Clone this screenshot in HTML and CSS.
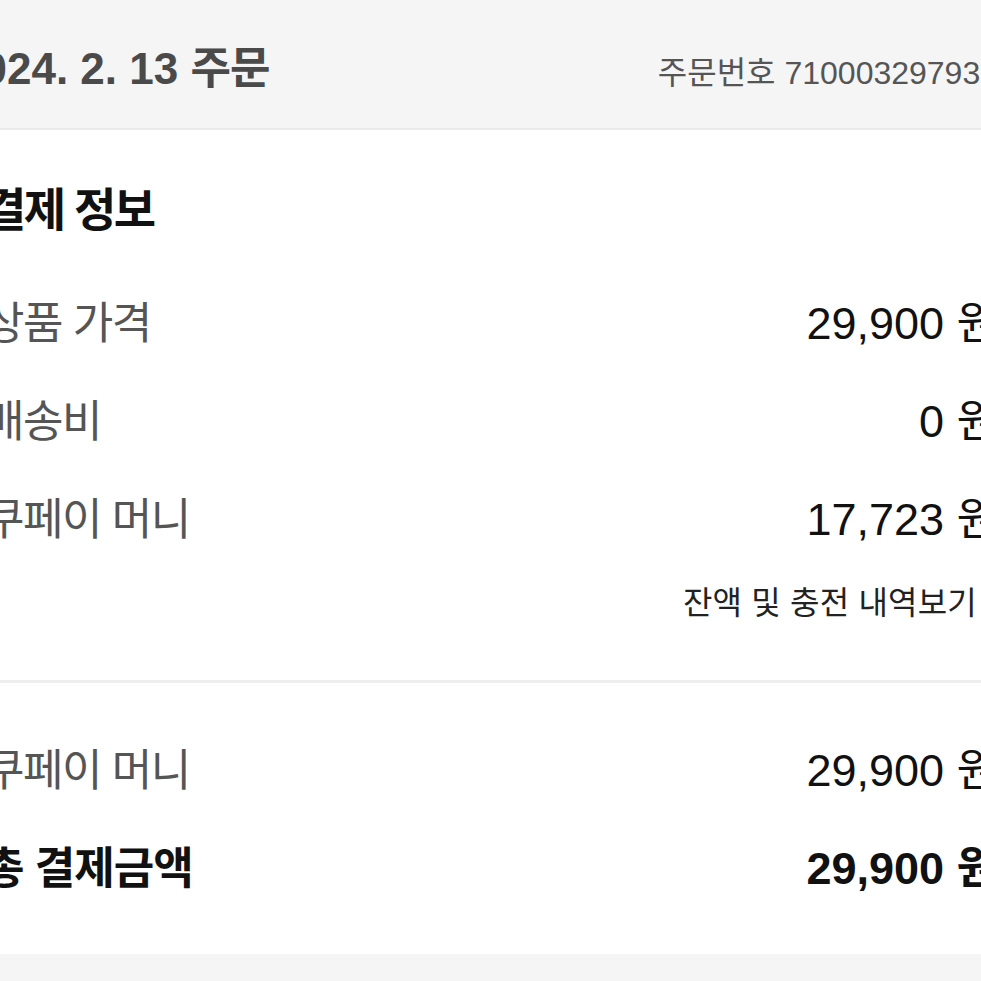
FILE: index.html
```html
<!DOCTYPE html>
<html lang="ko">
<head>
<meta charset="utf-8">
<title>주문 상세</title>
<link rel="stylesheet" href="styles.css">
</head>
<body>
<div class="page">
  <header class="order-head">
    <h1 class="order-date">2024. 2. 13 <span class="ko">주문</span></h1>
    <div class="order-no"><span class="ko">주문번호</span> 710003297937</div>
  </header>

  <section class="card card-top">
    <h2 class="card-title">결제 정보</h2>
    <div class="rows">
      <div class="row"><span class="label">상품 가격</span><span class="amount">29,900 <span class="won">원</span></span></div>
      <div class="row"><span class="label">배송비</span><span class="amount">0 <span class="won">원</span></span></div>
      <div class="row"><span class="label">쿠페이 머니</span><span class="amount">17,723 <span class="won">원</span></span></div>
    </div>
    <div class="link-row"><a class="history-link">잔액 및 충전 내역보기</a></div>
  </section>

  <section class="card card-bottom">
    <div class="row"><span class="label">쿠페이 머니</span><span class="amount">29,900 <span class="won">원</span></span></div>
    <div class="row total"><span class="label">총 결제금액</span><span class="amount">29,900 <span class="won">원</span></span></div>
  </section>
</div>
</body>
</html>
```

FILE: styles.css
```css
html {
  background: #f5f5f5;
}
body {
  margin: 0;
  overflow: hidden;
  font-family: "Liberation Sans", "Noto Sans CJK KR", sans-serif;
  background: #f5f5f5;
}
.page {
  margin: 0 -13px 0 -16px;
}

/* header */
.order-head {
  height: 130px;
  box-sizing: border-box;
  padding-top: 45px;
  display: flex;
  align-items: baseline;
  justify-content: space-between;
  background: #f5f5f5;
  border-bottom: 2px solid #ebebeb;
  white-space: nowrap;
}
.order-date {
  margin: 0 0 0 -26px;
  font-size: 44px;
  line-height: 48px;
  font-weight: 700;
  color: #4a4a4a;
}
.order-date .ko {
  letter-spacing: -1px;
}
.order-no {
  margin-right: -4px;
  font-size: 32px;
  line-height: 40px;
  color: #555;
}

/* cards */
.card {
  background: #fff;
}
.card-top {
  padding: 55px 0 59px;
  border-bottom: 3px solid #eeeeee;
}
.card-bottom {
  padding: 39px 0 36px;
}
.card-title {
  margin: 0;
  font-size: 46px;
  line-height: 50px;
  font-weight: 700;
  letter-spacing: -2.5px;
  color: #111;
}
.rows {
  margin-top: 40px;
}
.row {
  height: 98px;
  display: flex;
  align-items: center;
  justify-content: space-between;
  white-space: nowrap;
}
.label {
  font-size: 44px;
  line-height: 50px;
  letter-spacing: -1.5px;
  color: #555;
}
.amount {
  font-size: 45px;
  line-height: 50px;
  color: #111;
}
.won {
  letter-spacing: -4px;
}
.total .label {
  letter-spacing: -1px;
}
.total .label,
.total .amount {
  font-weight: 700;
  color: #111;
}
.link-row {
  margin-top: 16px;
  display: flex;
  justify-content: flex-end;
  padding-right: 17px;
}
.history-link {
  font-size: 32px;
  line-height: 36px;
  letter-spacing: 0.2px;
  color: #222;
}
```
